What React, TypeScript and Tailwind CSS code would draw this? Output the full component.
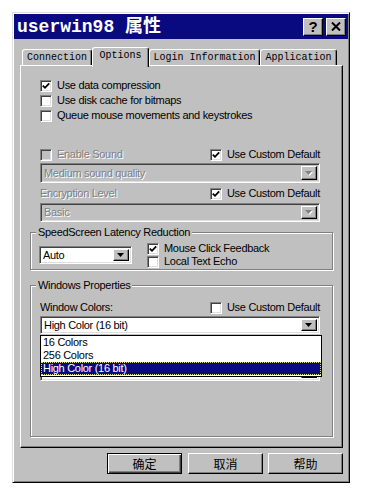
import React from "react";

const ui = "font-['Liberation_Sans',Arial,sans-serif] text-[11px] tracking-[-0.3px] leading-[13px]";
const dim = "text-[#808080] [text-shadow:1px_1px_0_#ffffff]";
const mono = "font-['Liberation_Mono','Noto_Sans_CJK_SC',monospace]";
const cjk = "font-['Noto_Sans_CJK_SC',sans-serif]";
const raised =
  "border border-t-white border-l-white border-r-black border-b-black shadow-[inset_-1px_-1px_#808080]";
const sunken =
  "border border-t-[#808080] border-l-[#808080] border-r-white border-b-white shadow-[inset_1px_1px_#404040,inset_-1px_-1px_#dfdfdf]";

function Check({ checked = false, disabled = false }: { checked?: boolean; disabled?: boolean }) {
  return (
    <span
      className={`w-[12px] h-[12px] shrink-0 flex items-center justify-center ${sunken} ${
        disabled ? "bg-[#c0c0c0]" : "bg-white"
      }`}
    >
      {checked && (
        <svg width="8" height="8" viewBox="0 0 8 8">
          <path d="M0.8 3.6 L3 5.8 L7.2 1.4" stroke="#000" strokeWidth="1.8" fill="none" />
        </svg>
      )}
    </span>
  );
}

function CheckRow({
  label,
  checked,
  disabled,
  h = "h-[15px]",
}: {
  label: string;
  checked?: boolean;
  disabled?: boolean;
  h?: string;
}) {
  return (
    <div className={`flex items-center gap-[5px] ${h}`}>
      <Check checked={checked} disabled={disabled} />
      <span className={`${ui} whitespace-nowrap ${disabled ? dim : "text-black"}`}>{label}</span>
    </div>
  );
}

function Arrow({ disabled }: { disabled?: boolean }) {
  return (
    <svg width="8" height="5" viewBox="0 0 8 5">
      {disabled && <path d="M1 1h7L4.5 5z" fill="#ffffff" />}
      <path d="M0 0h7L3.5 4z" fill={disabled ? "#808080" : "#000000"} />
    </svg>
  );
}

function Combo({ text, disabled, size }: { text: string; disabled?: boolean; size: string }) {
  return (
    <div className={`flex items-stretch p-[2px] ${sunken} ${disabled ? "bg-[#c0c0c0]" : "bg-white"} ${size}`}>
      <span className={`flex-1 flex items-center pl-[1px] ${ui} whitespace-nowrap ${disabled ? dim : "text-black"}`}>
        {text}
      </span>
      <span className={`w-[16px] bg-[#c0c0c0] flex items-center justify-center ${raised}`}>
        <Arrow disabled={disabled} />
      </span>
    </div>
  );
}

function TitleBtn({ children }: { children: React.ReactNode }) {
  return (
    <span className={`w-[20px] h-[18px] bg-[#c0c0c0] flex items-center justify-center ${raised}`}>{children}</span>
  );
}

function Tab({ label, w, active }: { label: string; w: string; active?: boolean }) {
  return (
    <div
      className={`${w} ${mono} text-[10px] leading-[12px] text-black bg-[#c0c0c0] flex justify-center whitespace-nowrap rounded-t-[3px] border-t border-l border-r border-t-white border-l-white border-r-black shadow-[inset_-1px_0_#808080] ${
        active ? "relative z-10 h-[20px] -mb-[2px] items-start pt-[2px]" : "h-[16px] items-center"
      }`}
    >
      {label}
    </div>
  );
}

function DlgButton({ label, isDefault, cls }: { label: string; isDefault?: boolean; cls: string }) {
  return (
    <button
      className={`w-[75px] h-[21px] bg-[#c0c0c0] flex items-center justify-center ${cjk} text-[12px] text-black ${cls} ${
        isDefault
          ? "border border-black shadow-[inset_1px_1px_#ffffff,inset_-1px_-1px_#404040,inset_-2px_-2px_#808080]"
          : raised
      }`}
    >
      {label}
    </button>
  );
}

export default function App() {
  return (
    <div className="w-[365px] h-[497px] bg-white pt-[12px] pl-[12px]">
      <div className="w-[338px] h-[471px] bg-[#c0c0c0] border border-t-[#dfdfdf] border-l-[#dfdfdf] border-r-black border-b-black shadow-[inset_1px_1px_#ffffff,inset_-1px_-1px_#808080] p-[1px] flex flex-col">
        {/* title bar */}
        <div className="h-[25px] shrink-0 bg-[#0a0a80] flex items-center pl-[3px] pr-[2px]">
          <span className={`${mono} font-bold text-[18px] leading-none text-white whitespace-pre`}>userwin98 属性</span>
          <div className="ml-auto flex gap-[3px]">
            <TitleBtn>
              <span className="font-['Liberation_Sans',Arial,sans-serif] font-bold text-[15px] leading-none text-black">?</span>
            </TitleBtn>
            <TitleBtn>
              <svg width="10" height="9" viewBox="0 0 10 9">
                <path d="M1 0.5 L9 8.5 M9 0.5 L1 8.5" stroke="#000" strokeWidth="2" />
              </svg>
            </TitleBtn>
          </div>
        </div>

        {/* tabs */}
        <div className="mt-[8px] ml-[8px] flex items-end h-[18px]">
          <Tab label="Connection" w="w-[70px]" />
          <Tab label="Options" w="w-[57px]" active />
          <Tab label="Login Information" w="w-[111px]" />
          <Tab label="Application" w="w-[77px]" />
        </div>

        {/* panel */}
        <div className="w-[323px] h-[383px] ml-[6px] border border-t-white border-l-white border-r-black border-b-black shadow-[inset_-1px_-1px_#808080] px-[9px] pt-[12px] flex flex-col">
          <div className="pl-[10px] pr-[13px] flex flex-col">
            <CheckRow label="Use data compression" checked />
            <CheckRow label="Use disk cache for bitmaps" />
            <CheckRow label="Queue mouse movements and keystrokes" />

            <div className="mt-[24px] flex items-center justify-between">
              <CheckRow label="Enable Sound" disabled />
              <CheckRow label="Use Custom Default" checked />
            </div>
            <div className="mt-[1px]">
              <Combo text="Medium sound quality" disabled size="w-full h-[20px]" />
            </div>
            <div className="mt-[3px] flex items-center justify-between h-[15px]">
              <span className={`${ui} ${dim}`}>Encryption Level</span>
              <CheckRow label="Use Custom Default" checked />
            </div>
            <div className="mt-[2px]">
              <Combo text="Basic" disabled size="w-full h-[19px]" />
            </div>
          </div>

          <fieldset className="mt-[4px] border border-[#808080] shadow-[1px_1px_0_#ffffff,inset_1px_1px_0_#ffffff] pl-[8px] pr-[8px] pt-[3px] pb-[1px]">
            <legend className={`${ui} text-black -ml-[3px] px-[2px] bg-[#c0c0c0]`}>SpeedScreen Latency Reduction</legend>
            <div className="flex items-center">
              <Combo text="Auto" size="w-[93px] h-[18px]" />
              <div className="ml-[15px] flex flex-col">
                <CheckRow label="Mouse Click Feedback" checked h="h-[13px]" />
                <CheckRow label="Local Text Echo" h="h-[13px]" />
              </div>
            </div>
          </fieldset>

          <fieldset className="mt-[9px] border border-[#808080] shadow-[1px_1px_0_#ffffff,inset_1px_1px_0_#ffffff] pl-[9px] pr-[12px] pt-[8px] pb-[55px]">
            <legend className={`${ui} text-black -ml-[4px] px-[2px] bg-[#c0c0c0]`}>Windows Properties</legend>
            <div className="flex items-center justify-between h-[15px]">
              <span className={`${ui} text-black`}>Window Colors:</span>
              <CheckRow label="Use Custom Default" />
            </div>
            <div className="relative mt-[1px]">
              <Combo text="High Color (16 bit)" size="w-full h-[18px]" />
              <div className="absolute left-0 top-[calc(100%+1px)] w-[282px] h-[42px] bg-white border border-black z-10 flex flex-col">
                <div className={`h-[13px] pl-[2px] ${ui} text-black flex items-center`}>16 Colors</div>
                <div className={`h-[13px] pl-[2px] ${ui} text-black flex items-center`}>256 Colors</div>
                <div className="h-[13px] pl-[1px] bg-[#0a0a80] border border-dotted border-[#d8d890] flex items-center">
                  <span className="font-['Liberation_Sans',Arial,sans-serif] text-[11px] tracking-[-0.3px] leading-[11px] text-white">
                    High Color (16 bit)
                  </span>
                </div>
              </div>
            </div>
            <div className="mt-[28px]">
              <Combo text="" size="w-full h-[19px]" />
            </div>
          </fieldset>
        </div>

        {/* buttons */}
        <div className="mt-[5px] mr-[5px] flex justify-end">
          <DlgButton label="确定" isDefault cls="" />
          <DlgButton label="取消" cls="ml-[6px]" />
          <DlgButton label="帮助" cls="ml-[5px]" />
        </div>
      </div>
    </div>
  );
}
